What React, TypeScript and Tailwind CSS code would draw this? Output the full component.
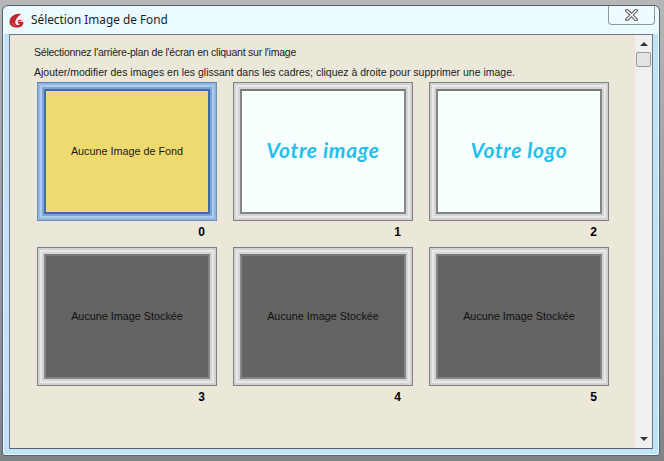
import type { ReactNode } from 'react';

const sans = { fontFamily: '"Liberation Sans", Arial, sans-serif' };

interface Slot {
  id: number;
  kind: 'selected' | 'logo' | 'empty';
  label: string;
}

const SLOTS: Slot[] = [
  { id: 0, kind: 'selected', label: 'Aucune Image de Fond' },
  { id: 1, kind: 'logo', label: 'Votre image' },
  { id: 2, kind: 'logo', label: 'Votre logo' },
  { id: 3, kind: 'empty', label: 'Aucune Image Stockée' },
  { id: 4, kind: 'empty', label: 'Aucune Image Stockée' },
  { id: 5, kind: 'empty', label: 'Aucune Image Stockée' },
];

const AppLogo = () => (
  <svg width="15" height="15" viewBox="0 0 15 15">
    <path d="M12 1 C7 0 0.500 3 0.500 9 C0.500 12.500 4 14.800 7.500 14.500 C11 14.800 14.500 13 14.500 9 L9 8.500 L9 10.500 L11 11 C10 12.500 7.500 12.500 6.500 10.500 C5.500 8 8 4 12 1 Z" fill="#c0262e" />
    <path d="M8 8 C9.500 6.500 12 6.500 14 7.500 L9 8.500 Z" fill="#d8483f" />
    <path d="M3 10 C3.500 11.500 5 12.500 6.500 12.800" stroke="#e8787a" strokeWidth="1" fill="none" />
  </svg>
);

// Bevelled picture frame, one nested border per ring of the bevel
const Bevel = ({ selected, children }: { selected: boolean; children: ReactNode }) => {
  if (selected) {
    return (
      <div className="h-[139px] border border-[#6d8fb8] border-t-[#5c84b4]">
        <div className="h-full border-[2px] border-[#93b6e0]">
          <div className="h-full border-[2px] border-[#b0cced]">
            <div className="h-full border-[2px] border-[#7fa5d6]">
              <div className="h-full border-[2px] border-[#3f6da3]">{children}</div>
            </div>
          </div>
        </div>
      </div>
    );
  }
  return (
    <div className="h-[139px] border border-[#808080]">
      <div className="h-full border-[2px] border-[#d2d2d2]">
        <div className="h-full border-[2px] border-[#e8e8e8]">
          <div className="h-full border-[2px] border-[#d4d4d4]">
            <div className="h-full border-[2px] border-[#858585] border-t-[#787878]">{children}</div>
          </div>
        </div>
      </div>
    </div>
  );
};

const ImageSlot = ({ slot }: { slot: Slot }) => {
  return (
    <div className="flex w-[180px] flex-col">
      <Bevel selected={slot.kind === 'selected'}>
        {slot.kind === 'selected' && (
          <div className="flex h-full items-center justify-center bg-[#efda70] text-[10.8px] text-[#1a1a1a]">
            {slot.label}
          </div>
        )}
        {slot.kind === 'logo' && (
          <div
            className="flex h-full items-center justify-center bg-[#f7ffff] pb-[4px] text-[21px] font-bold italic tracking-[0.7px] text-[#1fc0ea]"
            style={{ fontFamily: 'Lato, sans-serif' }}
          >
            {slot.label}
          </div>
        )}
        {slot.kind === 'empty' && (
          <div className="flex h-full items-center justify-center bg-[#646464] text-[10.8px] text-[#111111]">
            {slot.label}
          </div>
        )}
      </Bevel>
      <div className="mt-[2px] flex h-[19px] justify-end pr-[12px] text-[12px] font-bold leading-[19px] text-black">
        {slot.id}
      </div>
    </div>
  );
};

export default function App() {
  return (
    <div className="h-[461px] w-[664px] overflow-hidden bg-gradient-to-b from-[#b4b6b8] to-[#7f8489] px-[2px] pt-[5px]" style={sans}>
      <div className="flex h-[451px] w-[658px] flex-col rounded-t-[6px] rounded-b-[3px] border border-[#5b6168] bg-[#bfe3f7] shadow-[inset_0_0_0_1px_#e8f7ff]">
        {/* Title bar */}
        <div className="flex h-[28px] shrink-0 items-start rounded-t-[6px] bg-[#eafaff]">
          <div className="mt-[7px] ml-[6px]">
            <AppLogo />
          </div>
          <span className="mt-[5px] ml-[7px] text-[11.8px] leading-[16px] text-[#1c1c1c]" style={{ fontFamily: '"Noto Sans", sans-serif' }}>
            Sélection Image de Fond
          </span>
          <button className="ml-auto mr-[4px] flex h-[19px] w-[47px] items-center justify-center rounded-b-[4px] border border-t-0 border-[#8a99a5] bg-[#f0fbff]">
            <svg width="13" height="12" viewBox="0 0 13 12">
              <path d="M2 1.500 L11 10.500 M11 1.500 L2 10.500" stroke="#5a5a5a" strokeWidth="3.500" strokeLinecap="square" />
              <path d="M2 1.500 L11 10.500 M11 1.500 L2 10.500" stroke="#f4f4f4" strokeWidth="1.500" strokeLinecap="square" />
            </svg>
          </button>
        </div>

        {/* Client area */}
        <div className="mx-[6px] flex h-[415px] border border-[#6f7880] border-b-[#5b6168] bg-[#ece8d9]">
          <div className="flex-1 pl-[24px] pt-[10px] text-[10.5px] text-[#1a1a1a]">
            <p className="h-[20px] leading-[14px] tracking-[-0.23px]">Sélectionnez l'arrière-plan de l'écran en cliquant sur l'image</p>
            <p className="h-[17px] leading-[14px]">Ajouter/modifier des images en les glissant dans les cadres; cliquez à droite pour supprimer une image.</p>
            <div className="ml-[3px] grid w-[572px] grid-cols-3 gap-x-[16px] gap-y-[5px]">
              {SLOTS.map((slot) => (
                <ImageSlot key={slot.id} slot={slot} />
              ))}
            </div>
          </div>

          {/* Scrollbar */}
          <div className="flex w-[17px] shrink-0 flex-col items-center bg-[#f0f0f0] pt-[7px]">
            <div className="h-0 w-0 border-x-[4px] border-b-[4px] border-x-transparent border-b-[#333333]" />
            <div className="mt-[6px] h-[15px] w-[15px] rounded-[2px] border border-[#9a9a9a] bg-[#e4e4e4]" />
            <div className="mt-auto mb-[7px] h-0 w-0 border-x-[4px] border-t-[4px] border-x-transparent border-t-[#333333]" />
          </div>
        </div>
      </div>
    </div>
  );
}
